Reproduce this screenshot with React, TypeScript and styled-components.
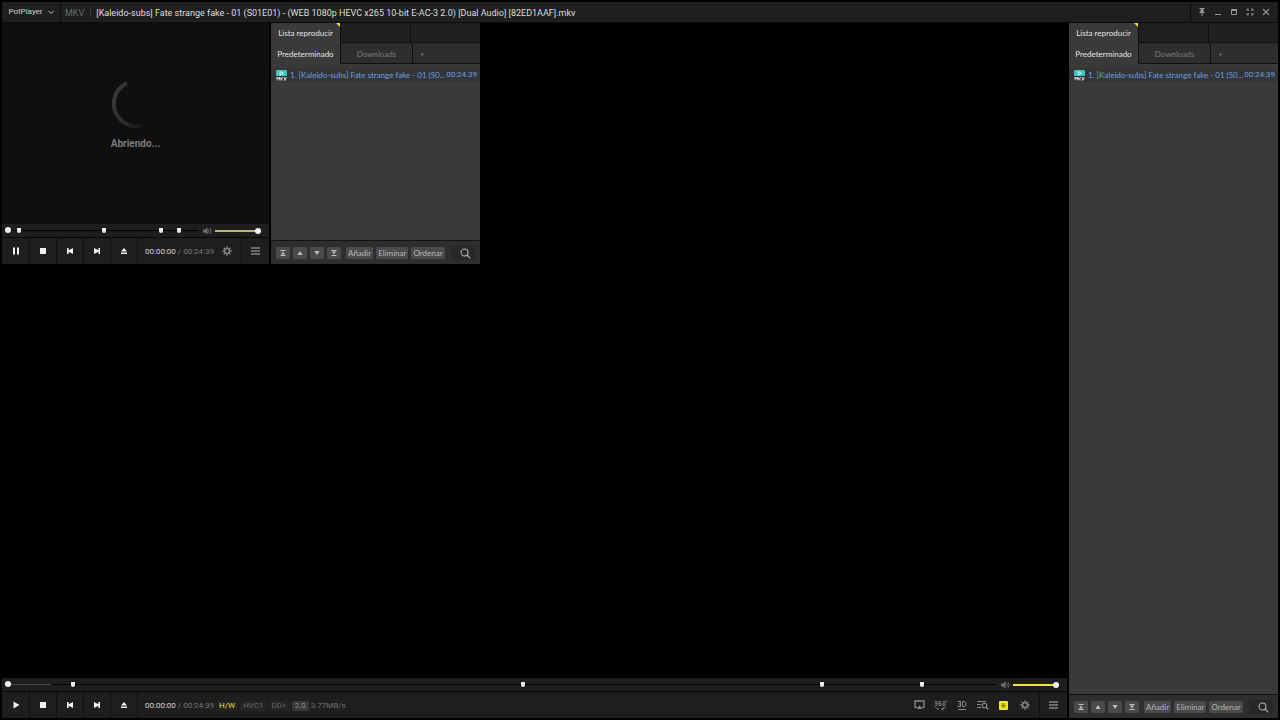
import React from "react";
import styled, { createGlobalStyle, css } from "styled-components";

const GlobalStyle = createGlobalStyle`
  *, *::before, *::after { box-sizing: border-box; }
  body { margin: 0; background: #000; }
  button, input { font: inherit; color: inherit; }
`;

const labelFont = 'Lato, "Open Sans", sans-serif';
const dataFont = 'Roboto, "Open Sans", sans-serif';

const Window = styled.div`
  display: flex;
  flex-direction: column;
  min-height: 100vh;
  padding: 2px;
  background: #000;
  color: #dcdcdc;
  font-family: ${labelFont};
  font-size: 8px;
  line-height: 12px;
`;

/* ---------- shared button reset ---------- */
const plainButton = css`
  display: inline-flex;
  flex: none;
  align-items: center;
  justify-content: center;
  margin: 0;
  padding: 0;
  border: 0;
  background: none;
  color: inherit;
  white-space: nowrap;
  cursor: pointer;
`;

/* ---------- title bar ---------- */
const TitleBar = styled.header`
  display: flex;
  align-items: stretch;
  height: 21px;
  background: #1f1f1f;
  border-bottom: 1px solid #0a0a0a;
  font-family: ${dataFont};
`;

const AppMenu = styled.button`
  ${plainButton}
  gap: 5px;
  width: 59px;
  border-right: 1px solid #0c0c0c;
  color: #d0d0d0;
`;

const Format = styled.span`
  display: flex;
  align-items: center;
  margin: 5px 0 4px;
  padding: 0 6px 0 4px;
  border-right: 1px solid #383838;
  color: #6a6a6a;
  font-size: 9px;
`;

const Title = styled.h1`
  flex: 1;
  min-width: 0;
  margin: 0;
  padding: 0 5px;
  overflow: hidden;
  color: #dedede;
  font-size: 9px;
  font-weight: 400;
  line-height: 22px;
  text-overflow: ellipsis;
  white-space: nowrap;
`;

const WindowButtons = styled.div`
  display: flex;
  align-items: center;
  padding: 0 4px 0 3px;
  border-left: 1px solid #0c0c0c;
`;

const WindowButton = styled.button`
  ${plainButton}
  width: 16px;
  height: 20px;
  color: #969696;
`;

/* ---------- layout ---------- */
const Body = styled.main`
  position: relative;
  display: flex;
  flex: 1;
  gap: 2px;
`;

const Player = styled.section`
  display: flex;
  flex: 1;
  flex-direction: column;
  min-width: 0;
`;

const Stage = styled.div<{ $busy?: boolean }>`
  display: flex;
  flex: 1;
  flex-direction: column;
  align-items: center;
  justify-content: center;
  gap: 6px;
  padding-bottom: 18px;
  background: ${(p) => (p.$busy ? "#0f0f0f" : "#000")};
  color: #7c7c7c;
  font-family: ${dataFont};
  font-size: 10px;
  font-weight: 700;
  line-height: 16px;
`;

const SmallWindow = styled.section`
  position: absolute;
  top: 0;
  left: 0;
  display: flex;
  gap: 2px;
  width: 478px;
  height: 241px;
  background: #000;
`;

/* ---------- seek bar ---------- */
const SeekRow = styled.div`
  display: flex;
  align-items: center;
  height: 14px;
  padding: 0 8px 0 3px;
  background: #1e1e1e;
  border-bottom: 1px solid #080808;
`;

const SeekTrack = styled.div`
  position: relative;
  display: flex;
  flex: 1;
  align-items: center;
  height: 13px;
`;

const Range = styled.input<{ $track: string; $thickness: number }>`
  appearance: none;
  width: 100%;
  height: 7px;
  margin: 0;
  background: none;

  &::-webkit-slider-runnable-track {
    height: ${(p) => p.$thickness}px;
    background: ${(p) => p.$track};
  }
  &::-webkit-slider-thumb {
    appearance: none;
    width: 6px;
    height: 6px;
    margin-top: ${(p) => (p.$thickness > 1 ? -2 : -3)}px;
    border-radius: 3px;
    background: #f2f2f2;
  }
`;

const Chapter = styled.span`
  position: absolute;
  top: 4px;
  width: 4px;
  height: 5px;
  margin-left: -2px;
  border-radius: 0 0 2px 2px;
  background: #ececec;
`;

const Mute = styled.button`
  ${plainButton}
  width: 9px;
  height: 12px;
  margin: 0 3px 0 5px;
  color: #6e6e6e;
`;

const Volume = styled.div`
  display: flex;
  width: 46px;
`;

/* ---------- transport ---------- */
const Transport = styled.div`
  display: flex;
  align-items: stretch;
  height: 26px;
  padding-left: 1px;
  background: #1e1e1e;
`;

const TransportButton = styled.button`
  ${plainButton}
  width: 27px;
  border-right: 1px solid #101010;
  color: #f0f0f0;
`;

const Info = styled.div`
  display: flex;
  flex: 1;
  align-items: center;
  gap: 2px;
  min-width: 0;
  padding: 1px 0 0 7px;
  color: #7a7a7a;
  font-family: ${dataFont};
  white-space: nowrap;
`;

const Elapsed = styled.span`
  color: #d8d8d8;
`;

const Badge = styled.span<{ $active?: boolean; $filled?: boolean }>`
  padding: 0 3px;
  border-radius: 2px;
  background: ${(p) => (p.$filled ? "#383838" : "#242424")};
  color: ${(p) => (p.$active ? "#e6dc3c" : p.$filled ? "#8c8c8c" : "#6a6a6a")};
  line-height: 10px;
`;

const Rate = styled.span`
  color: #707070;
`;

const Tool = styled.button`
  ${plainButton}
  width: 15px;
  height: 20px;
  color: #8a8a8a;
`;

const Tools = styled.div`
  display: flex;
  align-items: center;
  gap: 6px;
  padding-right: 7px;
`;

const MenuButton = styled.button`
  ${plainButton}
  width: 28px;
  border-left: 1px solid #101010;
  color: #b8b8b8;
`;

/* ---------- playlist ---------- */
const Playlist = styled.aside`
  display: flex;
  flex: none;
  flex-direction: column;
  width: 209px;
  background: #3a3a3a;
`;

const TabRow = styled.div<{ $height: number }>`
  display: flex;
  height: ${(p) => p.$height}px;
`;

const Tab = styled.button<{ $selected?: boolean; $tone: string }>`
  ${plainButton}
  position: relative;
  width: 70px;
  padding-top: 1px;
  border-right: 1px solid #101010;
  border-bottom: 1px solid ${(p) => (p.$selected ? "transparent" : "#101010")};
  background: ${(p) => (p.$selected ? "#3a3a3a" : p.$tone)};
  color: ${(p) => (p.$selected ? "#e4e4e4" : "#7c7c7c")};
`;

const DownloadsTab = styled(Tab)`
  width: 72px;
`;

const AddTab = styled(Tab)`
  flex: 1;
  justify-content: flex-start;
  padding-left: 7px;
  border-right: 0;
`;

const TabFiller = styled.div<{ $grow?: boolean }>`
  width: 70px;
  flex: ${(p) => (p.$grow ? "1" : "none")};
  border-right: ${(p) => (p.$grow ? "0" : "1px solid #101010")};
  border-bottom: 1px solid #101010;
  background: #202020;
`;

const Corner = styled.span`
  position: absolute;
  top: 0;
  right: 0;
  border-top: 4px solid #f0e62e;
  border-left: 4px solid transparent;
`;

const Items = styled.ol`
  flex: 1;
  margin: 0;
  padding: 4px 0 0;
  list-style: none;
`;

const Item = styled.li`
  display: flex;
  align-items: center;
  height: 14px;
  padding: 0 3px 1px 5px;
  background: #333536;
  color: #6b9fe0;
  white-space: nowrap;
`;

const ItemName = styled.span`
  flex: 1;
  margin-left: 3px;
`;

const Duration = styled.span`
  font-family: ${dataFont};
`;

const PlaylistFooter = styled.div`
  display: flex;
  align-items: center;
  gap: 3px;
  height: 24px;
  padding: 1px 5px 0;
  border-top: 1px solid #121212;
  background: #2e2e2e;
`;

const SquareButton = styled.button`
  ${plainButton}
  width: 14px;
  height: 12px;
  border-radius: 2px;
  background: #4a4a4a;
  color: #c0c0c0;
`;

const TextButton = styled(SquareButton)<{ $first?: boolean }>`
  width: auto;
  margin-left: ${(p) => (p.$first ? 2 : 0)}px;
  padding: 0 2px;
  color: #b8b8b8;
`;

const SearchButton = styled.button`
  ${plainButton}
  width: 24px;
  height: 14px;
  margin-left: auto;
  padding-left: 4px;
  background: #282828;
  color: #b0b0b0;
`;

/* ---------- icons ---------- */
const Glyph = styled.svg`
  flex: none;
`;

type IconProps = { w: number; h: number; children: React.ReactNode };

const Icon = ({ w, h, children }: IconProps) => (
  <Glyph width={w} height={h} viewBox={`0 0 ${w} ${h}`} fill="none" aria-hidden="true">
    {children}
  </Glyph>
);

const PlayIcon = () => (
  <Icon w={8} h={8}><path d="M1.500 .5 7.500 4 1.500 7.500Z" fill="currentColor" /></Icon>
);
const PauseIcon = () => (
  <Icon w={8} h={8}><path d="M1 .5h2v7H1zM5 .5h2v7H5z" fill="currentColor" /></Icon>
);
const StopIcon = () => (
  <Icon w={8} h={8}><path d="M1 1h6v6H1z" fill="currentColor" /></Icon>
);
const PreviousIcon = () => (
  <Icon w={8} h={8}><path d="M1 1h1.600v2.300L7 1v6L2.600 4.700V7H1z" fill="currentColor" /></Icon>
);
const NextIcon = () => (
  <Icon w={8} h={8}><path d="M7 1H5.400v2.300L1 1v6l4.400-2.300V7H7z" fill="currentColor" /></Icon>
);
const EjectIcon = () => (
  <Icon w={8} h={8}><path d="M4 1 7 4.600H1zM1 5.500h6V7H1z" fill="currentColor" /></Icon>
);
const MenuIcon = () => (
  <Icon w={9} h={8}><path d="M0 1h9M0 4h9M0 7h9" stroke="currentColor" strokeWidth="1.200" /></Icon>
);
const GearIcon = () => (
  <Icon w={10} h={10}>
    <circle cx="5" cy="5" r="2.400" stroke="currentColor" strokeWidth="1.300" />
    <path d="M5 .3v2M5 7.700v2M.3 5h2M7.700 5h2M1.700 1.700l1.400 1.400M6.900 6.900l1.400 1.400M8.300 1.700 6.900 3.100M3.100 6.900 1.700 8.300" stroke="currentColor" strokeWidth="1.300" />
  </Icon>
);
const SpeakerIcon = () => (
  <Icon w={9} h={8}>
    <path d="M0 2.500h1.800L4.500.5v7L1.800 5.500H0z" fill="currentColor" />
    <path d="M5.600 2.300q1.300 1.700 0 3.400M7 1.200q2.200 2.800 0 5.600" stroke="currentColor" strokeWidth=".9" />
  </Icon>
);
const ScreenIcon = () => (
  <Icon w={11} h={10}>
    <path d="M3 7.300H1V1h9v6.300H8" stroke="currentColor" strokeWidth="1.300" />
    <path d="M5.500 5.300 8.200 9H2.800z" fill="currentColor" />
  </Icon>
);
const Rotate360Icon = () => (
  <Icon w={14} h={11}>
    <path d="M.5 1.500h2.500v4H.5M1 3.500h2M7 1.500H5v4h2v-2H5M9 1.500h2v4H9z" stroke="currentColor" strokeWidth=".8" />
    <circle cx="12.800" cy="1.200" r=".6" stroke="currentColor" strokeWidth=".5" />
    <path d="M1.200 7q1 2 4 2M12 6.800q-1 1.900-4 2.200M9.500 7.200 7.700 9l1.800 1.600" stroke="currentColor" strokeWidth=".9" />
  </Icon>
);
const ThreeDIcon = () => (
  <Icon w={10} h={11}>
    <path d="M.5 1.500h3v5h-3M1.500 4h2M5.500 1.500v5H7q2 0 2-2.500T7 1.500zM1 9.500h8" stroke="currentColor" />
  </Icon>
);
const ListSearchIcon = () => (
  <Icon w={12} h={10}>
    <path d="M0 1.500h9M0 4.500h4M0 7.500h4" stroke="currentColor" />
    <circle cx="7.500" cy="5.500" r="2.300" stroke="currentColor" strokeWidth="1.100" />
    <path d="m9.200 7.200 2.200 2.200" stroke="currentColor" strokeWidth="1.300" />
  </Icon>
);
const PlaylistIcon = () => (
  <Icon w={9} h={9}>
    <rect width="9" height="9" rx="1" fill="#f0e62e" />
    <path d="M2.500 3h4M2.500 4.500h4M2.500 6h4" stroke="#55521c" strokeWidth=".8" />
  </Icon>
);
const SearchIcon = () => (
  <Icon w={11} h={11}>
    <circle cx="4.500" cy="4.500" r="3.500" stroke="currentColor" strokeWidth="1.100" />
    <path d="m7 7 3.300 3.300" stroke="currentColor" strokeWidth="1.200" />
  </Icon>
);
const MkvIcon = () => (
  <Icon w={11} h={12}>
    <rect width="11" height="7" y="1" rx="1" fill="#39c6bd" />
    <path d="M4 2.500 7.500 4.300 4 6.200Z" stroke="#e6ffff" strokeWidth=".8" />
    <path d="M0 7h11v5H0z" fill="#24292b" />
    <path d="M1 11.500V8l1.200 1.900L3.400 8v3.500M4.900 8v3.500M7.200 8 5.200 9.800l2 1.700M7.900 8l1.200 3.500L10.300 8" stroke="#f0f0f0" strokeWidth=".9" />
  </Icon>
);
const Spinner = () => (
  <Icon w={52} h={52}>
    <defs>
      <linearGradient id="spin" x1="6" y1="14" x2="47" y2="38" gradientUnits="userSpaceOnUse">
        <stop stopColor="#37373a" />
        <stop offset=".5" stopColor="#2c2c2f" />
        <stop offset=".9" stopColor="#0f0f0f" />
      </linearGradient>
    </defs>
    <path d="M15.500 6A22.500 22.500 0 1 0 45.500 37.500" stroke="url(#spin)" strokeWidth="4" strokeLinecap="round" />
  </Icon>
);

/* ---------- composed parts ---------- */
type SeekProps = { chapters: number[]; loaded: number; volumeColor: string };

const SeekBar = ({ chapters, loaded, volumeColor }: SeekProps) => (
  <SeekRow>
    <SeekTrack>
      <Range
        type="range"
        aria-label="Posición"
        defaultValue={0}
        $thickness={1}
        $track={`linear-gradient(90deg, #4a4a4a ${loaded}%, #000 ${loaded}%)`}
      />
      {chapters.map((at) => (
        <Chapter key={at} style={{ left: `${at}%` }} />
      ))}
    </SeekTrack>
    <Mute aria-label="Silenciar"><SpeakerIcon /></Mute>
    <Volume>
      <Range type="range" aria-label="Volumen" defaultValue={100} $thickness={2} $track={volumeColor} />
    </Volume>
  </SeekRow>
);

const TransportButtons = ({ playing }: { playing: boolean }) => (
  <>
    <TransportButton aria-label={playing ? "Pausa" : "Reproducir"}>
      {playing ? <PauseIcon /> : <PlayIcon />}
    </TransportButton>
    <TransportButton aria-label="Detener"><StopIcon /></TransportButton>
    <TransportButton aria-label="Anterior"><PreviousIcon /></TransportButton>
    <TransportButton aria-label="Siguiente"><NextIcon /></TransportButton>
    <TransportButton aria-label="Abrir"><EjectIcon /></TransportButton>
  </>
);

const Times = () => (
  <>
    <Elapsed>00:00:00</Elapsed>
    <span>/</span>
    <span>00:24:39</span>
  </>
);

const PlaylistPanel = () => (
  <Playlist>
    <TabRow $height={20}>
      <Tab $selected $tone="#202020">Lista reproducir<Corner /></Tab>
      <TabFiller />
      <TabFiller $grow />
    </TabRow>
    <TabRow $height={21}>
      <Tab $selected $tone="#2e2e2e">Predeterminado</Tab>
      <DownloadsTab $tone="#2e2e2e">Downloads</DownloadsTab>
      <AddTab $tone="#2e2e2e">+</AddTab>
    </TabRow>
    <Items>
      <Item>
        <MkvIcon />
        <ItemName>1. [Kaleido-subs] Fate strange fake - 01 (S0...</ItemName>
        <Duration>00:24:39</Duration>
      </Item>
    </Items>
    <PlaylistFooter>
      <SquareButton aria-label="Al principio">
        <Icon w={8} h={8}><path d="M1.500 1.500h5M1.500 6.500h5" stroke="currentColor" /><path d="m4 2.500 2 3H2z" fill="currentColor" /></Icon>
      </SquareButton>
      <SquareButton aria-label="Subir">
        <Icon w={8} h={8}><path d="m4 2 2.500 4h-5z" fill="currentColor" /></Icon>
      </SquareButton>
      <SquareButton aria-label="Bajar">
        <Icon w={8} h={8}><path d="m4 6 2.500-4h-5z" fill="currentColor" /></Icon>
      </SquareButton>
      <SquareButton aria-label="Al final">
        <Icon w={8} h={8}><path d="M1.500 1.500h5M1.500 6.500h5" stroke="currentColor" /><path d="m4 5.500 2-3H2z" fill="currentColor" /></Icon>
      </SquareButton>
      <TextButton $first>Añadir</TextButton>
      <TextButton>Eliminar</TextButton>
      <TextButton>Ordenar</TextButton>
      <SearchButton aria-label="Buscar"><SearchIcon /></SearchButton>
    </PlaylistFooter>
  </Playlist>
);

export default function App() {
  return (
    <Window>
      <GlobalStyle />
      <TitleBar>
        <AppMenu>
          PotPlayer
          <Icon w={6} h={5}><path d="m.5 1 2.500 2.500L5.500 1" stroke="currentColor" strokeWidth=".9" /></Icon>
        </AppMenu>
        <Format>MKV</Format>
        <Title>
          [Kaleido-subs] Fate strange fake - 01 (S01E01) - (WEB 1080p HEVC x265 10-bit E-AC-3 2.0) [Dual Audio] [82ED1AAF].mkv
        </Title>
        <WindowButtons>
          <WindowButton aria-label="Siempre visible">
            <Icon w={8} h={8}><path d="M1.500 0h5v1H5.500v2.500L7 5H1l1.500-1.500V1h-1zM3.500 5h1v3h-1z" fill="currentColor" /></Icon>
          </WindowButton>
          <WindowButton aria-label="Minimizar">
            <Icon w={8} h={8}><path d="M1 6.500h6" stroke="currentColor" /></Icon>
          </WindowButton>
          <WindowButton aria-label="Maximizar">
            <Icon w={8} h={8}><path d="M1.500 2v4.500h5V2" stroke="currentColor" /><path d="M1 1h6v2H1z" fill="currentColor" /></Icon>
          </WindowButton>
          <WindowButton aria-label="Pantalla completa">
            <Icon w={8} h={8}>
              <path d="M1 3V1h2M5 1h2v2M7 5v2H5M3 7H1V5M1 1l2 2M7 1 5 3M7 7 5 5M1 7l2-2" stroke="currentColor" strokeWidth=".8" />
            </Icon>
          </WindowButton>
          <WindowButton aria-label="Cerrar">
            <Icon w={8} h={8}><path d="m1 1 6 6M7 1 1 7" stroke="currentColor" strokeWidth="1.100" /></Icon>
          </WindowButton>
        </WindowButtons>
      </TitleBar>

      <Body>
        <Player>
          <Stage />
          <SeekBar chapters={[6.9, 52.3, 82.4, 92.5]} loaded={4.6} volumeColor="#f0e62e" />
          <Transport>
            <TransportButtons playing={false} />
            <Info>
              <Times />
              <Badge $active>H/W</Badge>
              <Badge>HVC1</Badge>
              <Badge>DD+</Badge>
              <Badge $filled>2.0</Badge>
              <Rate>3.77MB/s</Rate>
            </Info>
            <Tools>
              <Tool aria-label="Pantalla"><ScreenIcon /></Tool>
              <Tool aria-label="Vídeo 360°"><Rotate360Icon /></Tool>
              <Tool aria-label="3D"><ThreeDIcon /></Tool>
              <Tool aria-label="Buscar en la lista"><ListSearchIcon /></Tool>
              <Tool aria-label="Lista de reproducción"><PlaylistIcon /></Tool>
              <Tool aria-label="Preferencias"><GearIcon /></Tool>
            </Tools>
            <MenuButton aria-label="Menú"><MenuIcon /></MenuButton>
          </Transport>
        </Player>
        <PlaylistPanel />

        <SmallWindow>
          <Player>
            <Stage $busy>
              <Spinner />
              Abriendo...
            </Stage>
            <SeekBar chapters={[7.5, 51.5, 80.7, 90.3]} loaded={0} volumeColor="#bdb76b" />
            <Transport>
              <TransportButtons playing />
              <Info><Times /></Info>
              <Tools><Tool aria-label="Preferencias"><GearIcon /></Tool></Tools>
              <MenuButton aria-label="Menú"><MenuIcon /></MenuButton>
            </Transport>
          </Player>
          <PlaylistPanel />
        </SmallWindow>
      </Body>
    </Window>
  );
}
